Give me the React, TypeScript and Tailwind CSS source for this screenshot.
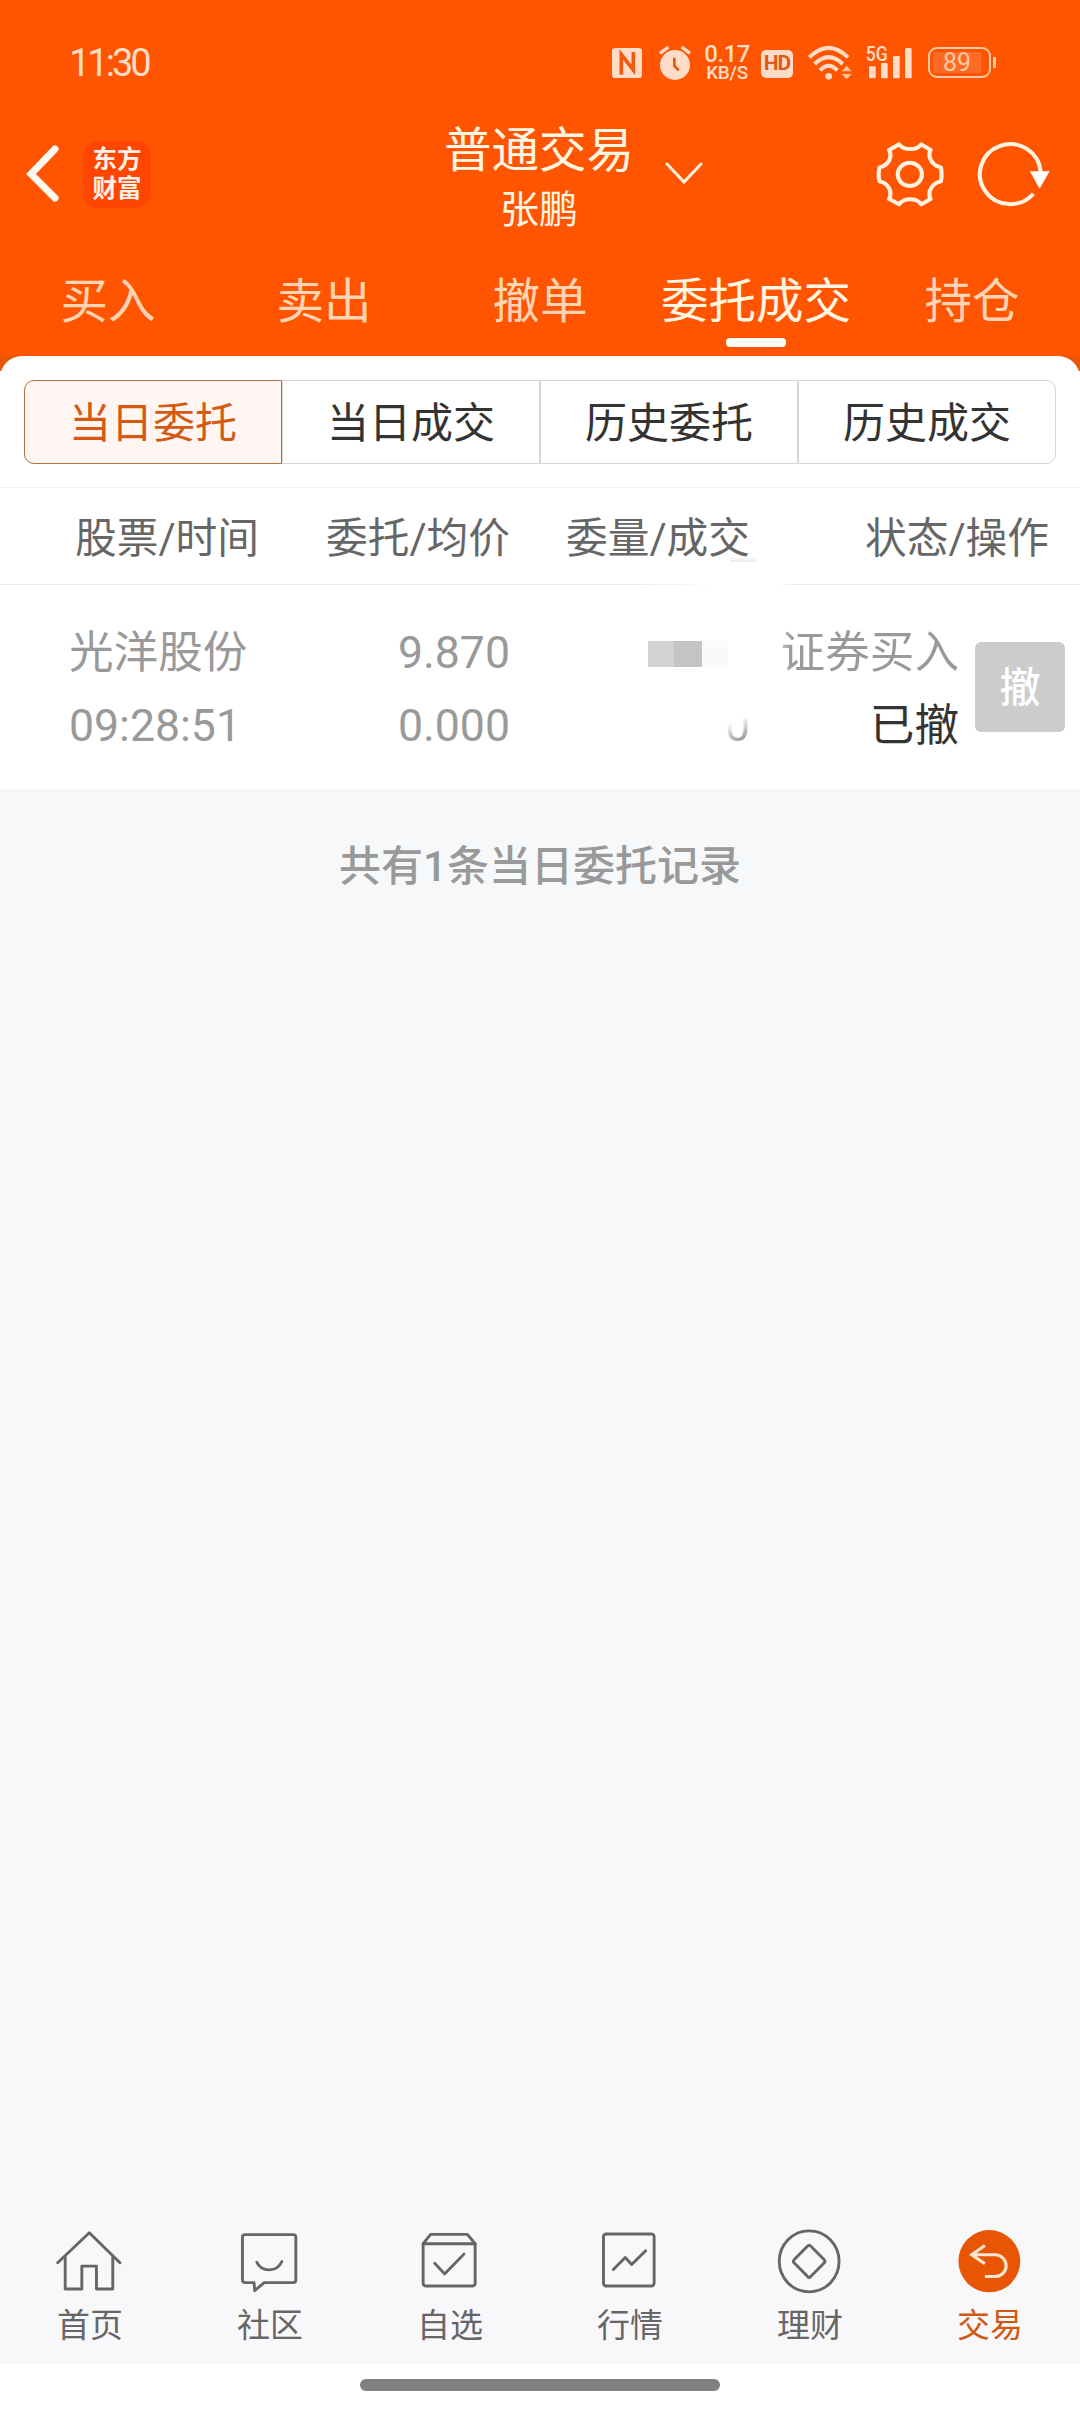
import React, { useState } from "react";
import clsx from "clsx";

const tabs = ["买入", "卖出", "撤单", "委托成交", "持仓"];
const segments = ["当日委托", "当日成交", "历史委托", "历史成交"];

const StatusBar = () => (
  <div className="flex h-[118px] items-center pt-[7px] pl-[69px] text-[#ffdcc4]">
    <span className="w-[543px] text-[38px] leading-none font-normal tracking-[-3px]">
      11:30
    </span>

    {/* NFC */}
    <svg className="h-[30px] w-[30px]" viewBox="0 0 90 90">
      <rect width="90" height="90" rx="10" fill="#ffdcc8" />
      <path
        d="M28 80V20L64 66V12"
        fill="none"
        stroke="#ee5a10"
        strokeWidth="11"
      />
    </svg>

    {/* Alarm */}
    <svg className="ml-[17px] h-[36px] w-[32px]" viewBox="0 0 96 108">
      <circle cx="48" cy="60" r="45" fill="#ffdcc8" />
      <path d="M3 25L28 6M93 25L68 6" stroke="#ffdcc8" strokeWidth="10" />
      <path
        d="M46 38v24l13 14"
        fill="none"
        stroke="#e65a10"
        strokeWidth="8"
      />
    </svg>

    <div className="ml-[13px] flex w-[46px] flex-col items-center font-medium">
      <span className="text-[24px] leading-[20px] tracking-[-0.5px]">0.17</span>
      <span className="text-[19px] leading-[18px] tracking-[-0.3px]">KB/S</span>
    </div>

    <div className="mt-[2px] ml-[11px] flex h-[28px] w-[32px] items-center justify-center rounded-[5px] bg-[#ffdcc8]">
      <span className="text-[21px] leading-none font-bold tracking-[-1px] text-[#dc5a18]">
        HD
      </span>
    </div>

    {/* Wi-Fi */}
    <svg className="ml-[15px] h-[36px] w-[46px]" viewBox="0 0 138 108">
      <g fill="none" stroke="#ffdcc8" strokeWidth="12">
        <path d="M4 37Q62 -20 120 37" />
        <path d="M20 57Q62 16 104 57" />
        <path d="M36 76Q62 48 88 76" />
      </g>
      <circle cx="62" cy="94" r="10" fill="#ffdcc8" />
      <path d="M101 79L116 62L131 79ZM101 87L116 103L131 87Z" fill="#ffc39c" />
    </svg>

    {/* Signal */}
    <svg
      className="ml-[11px] h-[36px] w-[48px] overflow-visible"
      viewBox="0 0 144 108"
    >
      <text
        x="2"
        y="47"
        fontSize="60"
        fontWeight="500"
        textLength="66"
        lengthAdjust="spacingAndGlyphs"
        fill="#ffdcc8"
      >
        5G
      </text>
      <g fill="#ffdcc8">
        <rect x="12" y="64" width="20" height="36" rx="4" />
        <rect x="48" y="54" width="20" height="46" rx="4" />
        <rect x="84" y="33" width="20" height="67" rx="4" />
        <rect x="120" y="9" width="20" height="91" rx="4" />
      </g>
    </svg>

    {/* Battery */}
    <div className="ml-[15px] flex h-[31px] w-[63px] items-center rounded-[9px] border-2 border-[#ffc9a3] p-[3px]">
      <div className="h-full w-[48px] bg-[#ff6a24] text-center text-[25px] leading-[22px] text-[#ffc9a3]">
        89
      </div>
    </div>
    <div className="ml-[2px] h-[11px] w-[3px] bg-[#ffc9a3]" />
  </div>
);

const TitleBar = () => (
  <div className="flex h-[112px] items-center">
    <svg className="ml-[25px] h-[60px] w-[35px]" viewBox="0 0 35 60">
      <path
        d="M30 5L6 30L30 54"
        fill="none"
        stroke="#fffaf0"
        strokeWidth="7"
        strokeLinecap="round"
      />
    </svg>
    <div className="ml-[23px] flex h-[67px] w-[68px] flex-col items-center justify-center rounded-[15px] bg-[#ff4600] text-[24.5px] leading-[29px] font-bold text-[#fff0e8]">
      <span>东方</span>
      <span>财富</span>
    </div>

    <div className="mt-[13px] ml-[286px] flex w-[204px] flex-col items-center text-[#fff6e4]">
      <span className="text-[47.5px] leading-[58px]">普通交易</span>
      <span className="text-[39px] leading-[60px]">张鹏</span>
    </div>

    <svg className="ml-[23px] h-[24px] w-[40px]" viewBox="0 0 40 24">
      <path
        d="M3 2L20 20L37 2"
        fill="none"
        stroke="#fff3e0"
        strokeWidth="3"
        strokeLinecap="round"
      />
    </svg>

    {/* Settings */}
    <svg
      className="ml-[171px] h-[66.700px] w-[69px]"
      viewBox="0 0 200 200"
      preserveAspectRatio="none"
    >
      <g fill="none" stroke="#fff3e0" strokeWidth="12" strokeLinejoin="round">
        <path d="M70 10C84 29 120 29 134 10L161 27C151 49 166 74 191 79Q195 100 191 121C166 126 151 151 161 174L134 190C120 170 84 170 70 190L41 174C52 151 38 126 13 121Q8 100 13 79C38 74 52 49 41 27Z" />
        <circle cx="101" cy="100" r="35" />
      </g>
    </svg>

    {/* Refresh */}
    <svg
      className="ml-[33px] h-[66.700px] w-[74px]"
      viewBox="0 0 214 200"
      preserveAspectRatio="none"
    >
      <path
        d="M163 158A88 90 0 1 1 184 92"
        fill="none"
        stroke="#fff3e0"
        strokeWidth="12"
      />
      <path d="M153 91H210L181 143Z" fill="#fff" />
    </svg>
  </div>
);

const navIcons = [
  {
    label: "首页",
    icon: (
      <>
        <path d="M7 104L100 14L190 104" />
        <path d="M29 87V182H78V114H121V182H169V87" />
      </>
    ),
  },
  {
    label: "社区",
    icon: (
      <>
        <path d="M29 20H170Q178 20 178 28V155Q178 163 170 163H85L57 187L55 163H29Q21 163 21 155V28Q21 20 29 20Z" />
        <path d="M63 102C78 133 122 133 137 100" />
      </>
    ),
  },
  {
    label: "自选",
    icon: (
      <>
        <path d="M23 47L45 19H153L176 47V165Q176 173 168 173H31Q23 173 23 165Z" />
        <path d="M23 47H176M57 105L86 137L143 78" />
      </>
    ),
  },
  {
    label: "行情",
    icon: (
      <>
        <rect x="24" y="18" width="149" height="155" rx="8" />
        <path d="M53 124L88 88L107 109L148 68" />
      </>
    ),
  },
  {
    label: "理财",
    icon: (
      <>
        <ellipse cx="99.5" cy="99.5" rx="88" ry="91" />
        <path d="M95 54Q99.500 48 104 54L144 95Q148 99.500 144 104L104 145Q99.500 151 95 145L55 104Q51 99.500 55 95Z" />
      </>
    ),
  },
];

const BottomNav = () => (
  <nav className="flex h-[146px] bg-[#f8f8fa] pt-[10px] text-[#666]">
    {navIcons.map((item) => (
      <div key={item.label} className="flex w-[180px] flex-col items-center">
        <svg
          className="h-[67px] w-[68px]"
          viewBox="2 0 200 200"
          preserveAspectRatio="none"
          fill="none"
          stroke="currentColor"
          strokeWidth="8.5"
          strokeLinecap="round"
          strokeLinejoin="round"
        >
          {item.icon}
        </svg>
        <span className="mt-[9px] text-[33px] leading-[44px]">{item.label}</span>
      </div>
    ))}
    <div className="flex w-[180px] flex-col items-center text-[#cf5817]">
      <svg
        className="h-[67px] w-[68px]"
        viewBox="2 0 200 200"
        preserveAspectRatio="none"
      >
        <ellipse cx="100" cy="99" rx="91" ry="93" fill="#e85504" />
        <path
          d="M87 52L48 80L87 107M50 80H117A32 32 0 0 1 117 145H87"
          fill="none"
          stroke="#ffe6cf"
          strokeWidth="9"
        />
      </svg>
      <span className="mt-[9px] text-[33px] leading-[44px]">交易</span>
    </div>
  </nav>
);

const App = () => {
  const [activeTab, setActiveTab] = useState("委托成交");
  const [segment, setSegment] = useState("当日委托");

  return (
    <div className="flex h-[2412px] w-[1080px] flex-col overflow-hidden bg-[#f7f8fa] font-[Roboto,'Noto_Sans_CJK_SC',sans-serif]">
      <header className="h-[356px] bg-[#ff5500]">
        <StatusBar />
        <TitleBar />
        <div className="flex pt-[42px]">
          {tabs.map((tab) => (
            <button
              key={tab}
              onClick={() => setActiveTab(tab)}
              className={clsx(
                "flex w-[216px] flex-col items-center text-[47.5px] leading-[60px]",
                tab === activeTab ? "text-[#fff6e4]" : "text-[#ffd4b4]"
              )}
            >
              {tab}
              {tab === activeTab && (
                <span className="mt-[6px] h-[9px] w-[60px] rounded-[4px] bg-[#fffdf8]" />
              )}
            </button>
          ))}
        </div>
      </header>

      {/* Rounded top of the sheet */}
      <div className="h-[15px] overflow-hidden bg-[#e85508]">
        <div className="h-[40px] rounded-t-[22px] bg-white" />
      </div>

      <main className="h-[418px] bg-white pt-[9px]">
        <div className="mx-[24px] flex h-[84px]">
          {segments.map((name) => (
            <button
              key={name}
              onClick={() => setSegment(name)}
              className={clsx(
                "w-[258px] border pt-[3px] text-[42px] leading-[79px] first:rounded-l-[10px] last:rounded-r-[10px]",
                name === segment
                  ? "border-[#b5703f] bg-[#fff5f2] text-[#d45a14]"
                  : "border-[#d4d6d8] text-[#333]"
              )}
            >
              {name}
            </button>
          ))}
        </div>

        <div className="mt-[23px] h-px bg-[#f4f4f4]" />
        <div className="flex h-[96px] items-center pt-[6px] text-right text-[41.700px] text-[#666]">
          <span className="w-[259px]">股票/时间</span>
          <span className="w-[251px]">委托/均价</span>
          <span className="relative w-[240px]">
            委量/成交
            <span className="absolute right-[-6px] bottom-[8px] h-[5px] w-[26px] bg-linear-to-b from-white to-[#e8e8e8]" />
          </span>
          <span className="w-[299px]">状态/操作</span>
        </div>
        <div className="flex h-px">
          <div className="w-[640px] bg-[#ebebeb]" />
          <div className="w-[80px] bg-linear-to-r from-[#ebebeb] to-white" />
          <div className="w-[55px]" />
          <div className="w-[20px] bg-linear-to-r from-white to-[#ebebeb]" />
          <div className="flex-1 bg-[#ebebeb]" />
        </div>

        <div className="flex pt-[32px] text-[44.600px] leading-[73px] text-[#999]">
          <div className="flex w-[260px] flex-col pl-[69px]">
            <span>光洋股份</span>
            <span>09:28:51</span>
          </div>
          <div className="flex w-[250px] flex-col text-right">
            <span>9.870</span>
            <span>0.000</span>
          </div>
          {/* Masked volume */}
          <div className="flex w-[240px] flex-col items-end">
            <div className="flex h-[73px] items-center pr-[22px]">
              <div className="h-[26px] w-[26px] bg-[#d2d2d2]" />
              <div className="h-[26px] w-[28px] bg-[#c4c4c4]" />
              <div className="h-[26px] w-[26px] bg-[#fafafa]" />
            </div>
            <span className="bg-linear-155 from-transparent from-42% to-[#999] to-68% bg-clip-text text-transparent">
              0
            </span>
          </div>
          <div className="flex w-[209px] flex-col text-right">
            <span className="bg-linear-to-r from-[#ddd] from-12% to-[#999] to-20% bg-clip-text text-transparent">
              证券买入
            </span>
            <span className="text-[#333]">已撤</span>
          </div>
          <button className="mt-[25px] ml-[16px] h-[90px] w-[90px] rounded-[6px] bg-[#ccc] text-[41px] leading-[93px] font-medium text-white">
            撤
          </button>
        </div>
      </main>

      <div className="flex-1 pt-[48px] text-center text-[42px] leading-[60px] font-medium text-[#999]">
        共有1条当日委托记录
      </div>

      <BottomNav />
      <div className="flex h-[48px] justify-center bg-white pt-[15px]">
        <div className="h-[12px] w-[360px] rounded-full bg-[#808080]" />
      </div>
    </div>
  );
};

export default App;
